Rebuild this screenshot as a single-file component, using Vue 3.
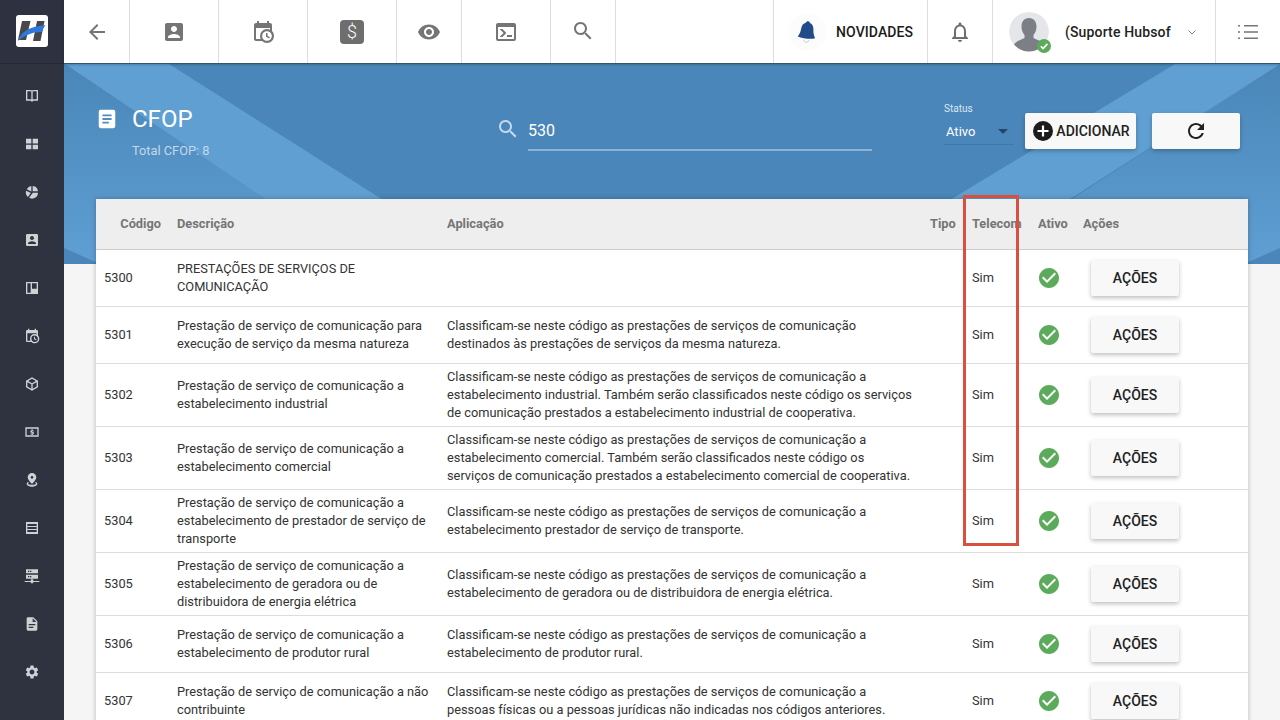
<script setup>
const P = {
  back: 'M20 11H7.83l5.59-5.59L12 4l-8 8 8 8 1.41-1.41L7.83 13H20v-2z',
  box: 'M3 5v14c0 1.1.89 2 2 2h14c1.1 0 2-.9 2-2V5c0-1.1-.9-2-2-2H5c-1.11 0-2 .9-2 2zm12 4c0 1.66-1.34 3-3 3s-3-1.34-3-3 1.34-3 3-3 3 1.34 3 3zm-9 8c0-2 4-3.1 6-3.1s6 1.1 6 3.1v1H6v-1z',
  cal: 'M15,13H16.5V15.82L18.94,17.23L18.19,18.53L15,16.69V13M19,8H5V19H9.67C9.24,18.09 9,17.07 9,16A7,7 0 0,1 16,9C17.07,9 18.09,9.24 19,9.67V8M5,21C3.89,21 3,20.1 3,19V5C3,3.89 3.89,3 5,3H6V1H8V3H16V1H18V3H19A2,2 0 0,1 21,5V11.1C22.24,12.36 23,14.09 23,16A7,7 0 0,1 16,23C14.09,23 12.36,22.24 11.1,21H5M16,11.15A4.85,4.85 0 0,0 11.15,16C11.15,18.68 13.32,20.85 16,20.85A4.85,4.85 0 0,0 20.85,16C20.85,13.32 18.68,11.15 16,11.15Z',
  eye: 'M12 4.5C7 4.5 2.73 7.61 1 12c1.73 4.39 6 7.5 11 7.5s9.27-3.11 11-7.5c-1.73-4.39-6-7.5-11-7.5zM12 17c-2.76 0-5-2.24-5-5s2.24-5 5-5 5 2.24 5 5-2.24 5-5 5zm0-8c-1.66 0-3 1.34-3 3s1.34 3 3 3 3-1.34 3-3-1.34-3-3-3z',
  term: 'M20,19V7H4V19H20M20,3A2,2 0 0,1 22,5V19A2,2 0 0,1 20,21H4A2,2 0 0,1 2,19V5C2,3.89 2.9,3 4,3H20M13,17V15H18V17H13M9.58,13L5.57,9H8.4L11.7,12.3C12.09,12.69 12.09,13.33 11.7,13.72L8.42,17H5.59L9.58,13Z',
  search: 'M15.5 14h-.79l-.28-.27C15.41 12.59 16 11.11 16 9.5 16 5.91 13.09 3 9.5 3S3 5.91 3 9.5 5.91 16 9.5 16c1.61 0 3.09-.59 4.23-1.57l.27.28v.79l5 4.99L20.49 19l-4.99-5zm-6 0C7.01 14 5 11.99 5 9.5S7.01 5 9.5 5 14 7.01 14 9.5 11.99 14 9.5 14z',
  bell: 'M12 22c1.1 0 2-.9 2-2h-4c0 1.1.9 2 2 2zm6-6v-5c0-3.07-1.63-5.64-4.5-6.32V4c0-.83-.67-1.5-1.5-1.5s-1.5.67-1.5 1.5v.68C7.64 5.36 6 7.92 6 11v5l-2 2v1h16v-1l-2-2zm-2 1H8v-6c0-2.48 1.51-4.5 4-4.5s4 2.02 4 4.5v6z',
  list: 'M8 5h14v1.6H8zM8 11.2h14v1.6H8zM8 17.4h14V19H8zM2 5h2v1.6H2zM2 11.2h2v1.6H2zM2 17.4h2V19H2z',
  refresh: 'M17.65 6.35C16.2 4.9 14.21 4 12 4c-4.42 0-7.99 3.58-7.99 8s3.57 8 7.99 8c3.73 0 6.84-2.55 7.73-6h-2.08c-.82 2.33-3.04 4-5.65 4-3.31 0-6-2.69-6-6s2.69-6 6-6c1.66 0 3.14.69 4.22 1.78L13 11h7V4l-2.35 2.35z',
  doc: 'M5 2h14a2 2 0 0 1 2 2v16a2 2 0 0 1-2 2H5a2 2 0 0 1-2-2V4a2 2 0 0 1 2-2zm2 5v2h10V7H7zm0 4v2h10v-2H7zm0 4v2h7v-2H7z',
  book: 'M3 3h7c1 0 1.600.4 2 1 .4-.6 1-1 2-1h7v16h-6.500c-1 0-1.600.4-1.700 1.500h-1.600C11.100 19.400 10.500 19 9.500 19H3V3zm2 2v12h4.500c.6 0 1.100.1 1.500.3V6c0-.6-.4-1-1-1H5zm14 0h-5c-.6 0-1 .4-1 1v11.300c.4-.2.9-.3 1.500-.3H19V5z',
  grid: 'M3 4h8v7.400H3zM13 4h8v7.400h-8zM3 13h8v7H3zM13 13h8v7h-8z',
  pie: 'M11 3v8.200L4.200 8A9 9 0 0 1 11 3zM13 3a9 9 0 0 1 8 8h-8V3zM3.300 10l7 3.600-4.500 6A9 9 0 0 1 3.300 10zM13 13h8a9 9 0 0 1-13.400 7.800L13 13.600V13z',
  dash: 'M3 3h18v18H3V3zm2 2v14h5V5H5zm7 0v8h7V5h-7z',
  cube: 'M12 2l9 5v10l-9 5-9-5V7l9-5zm0 2.300L6.200 7.500 12 10.700l5.800-3.200L12 4.300zM5 9.200v6.600l6 3.300v-6.600L5 9.200zm14 0l-6 3.300v6.600l6-3.300V9.200z',
  money: 'M2 5h20v14H2V5zm2 2v10h16V7H4zm9.200 2.300v-.9h-2v.9c-1 .2-1.700 1-1.700 1.900 0 1.200 1 1.700 2.300 2 .9.200 1.200.4 1.200.8s-.4.7-1 .7c-.7 0-1.100-.3-1.200-.8H9.400c.1 1 .8 1.600 1.800 1.800v.9h2v-.9c1-.2 1.700-.9 1.700-1.900 0-1.300-1-1.800-2.300-2.100-.9-.2-1.200-.4-1.200-.7s.3-.6.9-.6.900.3 1 .7h1.500c-.1-.9-.7-1.600-1.600-1.800z',
  pin: 'M12 1.500a6.500 6.500 0 0 1 6.500 6.500c0 4.300-6.500 10-6.500 10S5.500 12.300 5.500 8A6.500 6.500 0 0 1 12 1.500zm0 4.500a2 2 0 1 0 0 4 2 2 0 0 0 0-4zM4 17.500c0-1.200 1-2 2.200-2.600l1.100 1.500c-.8.300-1.300.7-1.300 1.100 0 .9 2.700 1.500 6 1.500s6-.6 6-1.500c0-.4-.5-.8-1.300-1.100l1.100-1.500c1.200.6 2.200 1.400 2.200 2.600C20 20.500 15.500 22 12 22s-8-1.500-8-4.500z',
  lines: 'M3 3h18v18H3V3zm2 3v3h14V6H5zm0 4.500v3h14v-3H5zm0 4.500v3h14v-3H5z',
  server: 'M3 2h18v6H3V2zm3 2v2h2V4H6zm3 0v2h2V4H9zM3 10h18v6H3v-6zm3 2v2h2v-2H6zm3 0v2h2v-2H9zM1 19.500h9.200V17h3.600v2.500H23v1.500h-9.200v2h-3.600v-2H1v-1.500z',
  file: 'M6 2h8l6 6v12a2 2 0 0 1-2 2H6a2 2 0 0 1-2-2V4a2 2 0 0 1 2-2zm7 1.500V9h5.500L13 3.500zM7 12v2h10v-2H7zm0 4v2h7v-2H7z',
  gear: 'M19.14 12.94c.04-.3.06-.61.06-.94 0-.32-.02-.64-.07-.94l2.03-1.58a.49.49 0 0 0 .12-.61l-1.92-3.32a.488.488 0 0 0-.59-.22l-2.39.96c-.5-.38-1.03-.7-1.62-.94l-.36-2.54a.484.484 0 0 0-.48-.41h-3.84c-.24 0-.43.17-.47.41l-.36 2.54c-.59.24-1.13.57-1.62.94l-2.39-.96c-.22-.08-.47 0-.59.22L2.74 8.87c-.12.21-.08.47.12.61l2.03 1.58c-.05.3-.09.63-.09.94s.02.64.07.94l-2.03 1.58a.49.49 0 0 0-.12.61l1.92 3.32c.12.22.37.29.59.22l2.39-.96c.5.38 1.03.7 1.62.94l.36 2.54c.05.24.24.41.48.41h3.84c.24 0 .44-.17.47-.41l.36-2.54c.59-.24 1.13-.56 1.62-.94l2.39.96c.22.08.47 0 .59-.22l1.92-3.32c.12-.22.07-.47-.12-.61l-2.01-1.58zM12 15.6c-1.98 0-3.6-1.62-3.6-3.6s1.62-3.6 3.6-3.6 3.6 1.62 3.6 3.6-1.62 3.6-3.6 3.6z',
  ok: 'M12 2C6.48 2 2 6.48 2 12s4.48 10 10 10 10-4.48 10-10S17.52 2 12 2zm-2 15l-5-5 1.41-1.41L10 14.17l7.59-7.59L19 8l-9 9z',
};
const side = ['book', 'grid', 'pie', 'box', 'dash', 'cal', 'cube', 'money', 'pin', 'lines', 'server', 'file', 'gear'];
const rows = [
  ['5300', 'PRESTAÇÕES DE SERVIÇOS DE COMUNICAÇÃO', ''],
  ['5301', 'Prestação de serviço de comunicação para execução de serviço da mesma natureza', 'Classificam-se neste código as prestações de serviços de comunicação destinados às prestações de serviços da mesma natureza.'],
  ['5302', 'Prestação de serviço de comunicação a estabelecimento industrial', 'Classificam-se neste código as prestações de serviços de comunicação a estabelecimento industrial. Também serão classificados neste código os serviços de comunicação prestados a estabelecimento industrial de cooperativa.'],
  ['5303', 'Prestação de serviço de comunicação a estabelecimento comercial', 'Classificam-se neste código as prestações de serviços de comunicação a estabelecimento comercial. Também serão classificados neste código os serviços de comunicação prestados a estabelecimento comercial de cooperativa.'],
  ['5304', 'Prestação de serviço de comunicação a estabelecimento de prestador de serviço de transporte', 'Classificam-se neste código as prestações de serviços de comunicação a estabelecimento prestador de serviço de transporte.'],
  ['5305', 'Prestação de serviço de comunicação a estabelecimento de geradora ou de distribuidora de energia elétrica', 'Classificam-se neste código as prestações de serviços de comunicação a estabelecimento de geradora ou de distribuidora de energia elétrica.'],
  ['5306', 'Prestação de serviço de comunicação a estabelecimento de produtor rural', 'Classificam-se neste código as prestações de serviços de comunicação a estabelecimento de produtor rural.'],
  ['5307', 'Prestação de serviço de comunicação a não contribuinte', 'Classificam-se neste código as prestações de serviços de comunicação a pessoas físicas ou a pessoas jurídicas não indicadas nos códigos anteriores.'],
];
</script>

<template>
  <div class="app">
    <aside class="sidebar">
      <div class="logo-wrap">
        <svg class="logo" viewBox="0 0 32 32">
          <rect width="32" height="32" rx="3" fill="#fff" />
          <path d="M6 6h8.500L10 25H2z" fill="#48484c" />
          <path d="M21 6h7.500L24.500 26H17z" fill="#48484c" />
          <path d="M2 26C5 17 12 12 29.500 10c-1.500 2-2.500 4.500-3.500 7C17 16.500 9 20 2 26z" fill="#2f78dc" />
        </svg>
      </div>
      <nav class="side-list">
        <div v-for="n in side" :key="n" class="side-item">
          <svg viewBox="0 0 24 24" class="side-ico"><path :d="P[n]" /></svg>
        </div>
      </nav>
    </aside>

    <div class="main">
      <header class="topbar">
        <div class="tb w66"><svg viewBox="0 0 24 24" class="ti"><path :d="P.back" /></svg></div>
        <div class="tb w89"><svg viewBox="0 0 24 24" class="ti"><path :d="P.box" /></svg></div>
        <div class="tb w89"><svg viewBox="0 0 24 24" class="ti"><path :d="P.cal" /></svg></div>
        <div class="tb w89"><span class="dollar">$</span></div>
        <div class="tb w65"><svg viewBox="0 0 24 24" class="ti"><path :d="P.eye" /></svg></div>
        <div class="tb w89"><svg viewBox="0 0 24 24" class="ti"><path :d="P.term" /></svg></div>
        <div class="tb w65"><svg viewBox="0 0 24 24" class="ti up"><path :d="P.search" /></svg></div>
        <div class="tb-space"></div>
        <div class="tb nov">
          <span class="nov-bell">
            <svg viewBox="0 0 24 28" class="bell-solid">
              <path d="M12 1c1.300 0 2.200.8 2.500 2 3 .9 4.500 3.500 4.800 7 .3 4 1 7 3.200 10.500-5 2-15 2-21 0C3.700 17 4.400 14 4.700 10 5 6.500 6.500 3.900 9.500 3c.3-1.200 1.200-2 2.500-2z" fill="#214c89" />
              <path d="M9 23.500c.5 2 1.500 3 3.200 3s2.700-1 3.100-3" fill="none" stroke="#b9c6d8" stroke-width="1" />
            </svg>
          </span>
          <span class="nov-t">NOVIDADES</span>
        </div>
        <div class="tb w65"><svg viewBox="0 0 24 24" class="ti thin"><path :d="P.bell" /></svg></div>
        <div class="tb user">
          <span class="avatar">
            <svg viewBox="0 0 40 40" class="avatar-svg">
              <circle cx="20" cy="20" r="20" fill="#e4e6e9" />
              <path d="M20 6c5 0 7.500 3.800 7.500 8.500 0 3.500-1.200 6.500-3 8.500v3c2 1.500 8 2.500 10.500 6.500-3.500 4.500-9 7.500-15 7.500s-11.500-3-15-7.500C7.500 28.500 13.500 27.500 15.500 26v-3c-1.800-2-3-5-3-8.500C12.500 9.800 15 6 20 6z" fill="#7c7f86" />
            </svg>
            <svg viewBox="0 0 14 14" class="badge">
              <circle cx="7" cy="7" r="7" fill="#5cab5c" />
              <path d="M3.800 7.200l2.300 2.300 4.300-4.600" fill="none" stroke="#fff" stroke-width="1.600" />
            </svg>
          </span>
          <span class="user-name">(Suporte Hubsof</span>
          <svg viewBox="0 0 12 12" class="chev"><path d="M2.500 4.500L6 8l3.500-3.500" fill="none" stroke="#888" stroke-width="1" /></svg>
        </div>
        <div class="tb w64 last"><svg viewBox="0 0 24 24" class="ti"><path :d="P.list" /></svg></div>
      </header>

      <div class="content">
        <svg class="banner" viewBox="0 0 1216 200" preserveAspectRatio="none">
          <defs>
            <linearGradient id="sideG" x1="0" y1="0" x2="0" y2="1">
              <stop offset="0" stop-color="#4a86b8" />
              <stop offset="1" stop-color="#5f9fd3" />
            </linearGradient>
          </defs>
          <rect width="1216" height="200" fill="#4a86b9" />
          <polygon points="0,0 0,200 305,200" fill="url(#sideG)" />
          <polygon points="1216,0 1216,200 908,200" fill="url(#sideG)" />
          <polygon points="1,0 105,0 420,200 298,200" fill="#5f9fd2" />
          <polygon points="1111,0 1216,0 905,200 780,200" fill="#5f9fd2" />
          <polygon points="0,184 0,200 36,200" fill="#4a86b9" />
          <polygon points="1216,184 1216,200 1180,200" fill="#4a86b9" />
        </svg>

        <section class="head">
          <div class="title-block">
            <div class="title-row">
              <svg viewBox="0 0 24 24" class="title-ico"><path :d="P.doc" /></svg>
              <h1>CFOP</h1>
            </div>
            <p class="total">Total CFOP: 8</p>
          </div>
          <div class="search">
            <svg viewBox="0 0 24 24" class="search-ico"><path :d="P.search" /></svg>
            <div class="search-val">530</div>
          </div>
          <div class="status">
            <div class="status-l">Status</div>
            <div class="status-v"><span>Ativo</span><i class="caret"></i></div>
          </div>
          <button class="btn add">
            <svg viewBox="0 0 20 20" class="plus">
              <circle cx="10" cy="10" r="10" fill="#1c1c1c" />
              <path d="M10 4.500v11M4.500 10h11" stroke="#fff" stroke-width="2.200" />
            </svg>
            ADICIONAR
          </button>
          <button class="btn refresh">
            <svg viewBox="0 0 24 24" class="ref-ico"><path :d="P.refresh" /></svg>
          </button>
        </section>

        <section class="table-wrap">
          <table>
            <colgroup>
              <col class="c1" /><col class="c2" /><col class="c3" /><col class="c4" /><col class="c5" /><col class="c6" /><col class="c7" />
            </colgroup>
            <thead>
              <tr>
                <th class="right">Código</th>
                <th>Descrição</th>
                <th>Aplicação</th>
                <th>Tipo</th>
                <th>Telecom</th>
                <th>Ativo</th>
                <th>Ações</th>
              </tr>
            </thead>
            <tbody>
              <tr v-for="r in rows" :key="r[0]">
                <td>{{ r[0] }}</td>
                <td>{{ r[1] }}</td>
                <td>{{ r[2] }}</td>
                <td></td>
                <td>Sim</td>
                <td><svg viewBox="0 0 24 24" class="ok"><path :d="P.ok" /></svg></td>
                <td><button class="btn act">AÇÕES</button></td>
              </tr>
            </tbody>
          </table>
          <div class="mark"></div>
        </section>
      </div>
    </div>
  </div>
</template>

<style>
html, body { margin: 0; overflow: hidden; }
</style>

<style scoped>
.app { display: flex; width: 1280px; height: 720px; overflow: hidden; font-family: Roboto, "Liberation Sans", sans-serif; background: #f5f5f5; }
.sidebar { width: 64px; flex: none; background: #2f333f; }
.logo-wrap { height: 63px; border-bottom: 1px solid #262a34; background: #2e3240; display: flex; align-items: flex-start; justify-content: center; }
.logo { width: 32px; height: 32px; margin-top: 15px; display: block; }
.side-list { padding-top: 8px; }
.side-item { height: 48px; display: flex; align-items: center; justify-content: center; }
.side-ico { width: 16px; height: 16px; fill: #cfd1d5; }
.main { flex: 1; min-width: 0; display: flex; flex-direction: column; }
.topbar { height: 63px; flex: none; display: flex; background: #fff; border-bottom: 1px solid #33566f; box-shadow: 0 1px 2px rgba(0,0,0,.2); position: relative; z-index: 2; }
.tb { display: flex; align-items: center; justify-content: center; border-right: 1px solid #ddd; box-sizing: border-box; flex: none; }
.w64 { width: 64px; }
.w65 { width: 65px; }
.w66 { width: 66px; }
.w89 { width: 89px; }
.last { border-right: 0; }
.tb-space { flex: 1; border-right: 1px solid #ddd; }
.ti { width: 24px; height: 24px; fill: #757575; }
.up { margin-top: -2px; }
.thin { fill: #6f6f6f; }
.dollar { width: 24px; height: 24px; border-radius: 4px; background: #6e6e6e; color: #fff; font: 300 18px/24px Roboto, sans-serif; text-align: center; }
.nov { width: 154px; justify-content: flex-start; }
.nov-bell { width: 38px; height: 38px; margin-left: 14px; border-radius: 50%; background: #fcfcfc; display: flex; align-items: center; justify-content: center; flex: none; }
.bell-solid { width: 20px; height: 24px; transform: rotate(6deg); }
.nov-t { margin-left: 10px; font-size: 14px; font-weight: 500; color: #1b1b1b; letter-spacing: .1px; }
.user { width: 223px; justify-content: flex-start; padding-left: 16px; }
.avatar { position: relative; width: 40px; height: 40px; flex: none; }
.avatar-svg { width: 40px; height: 40px; display: block; clip-path: circle(20px); }
.badge { position: absolute; right: -2px; bottom: -1px; width: 14px; height: 14px; }
.user-name { margin-left: 16px; font-size: 14px; font-weight: 500; color: #222; white-space: nowrap; letter-spacing: .15px; }
.chev { width: 12px; height: 12px; margin-left: 15px; }
.content { flex: 1; position: relative; min-height: 0; }
.banner { position: absolute; left: 0; top: 0; width: 100%; height: 200px; display: block; }
.head { position: relative; height: 135px; display: flex; align-items: flex-start; padding: 0 40px 0 35px; box-sizing: border-box; }
.title-block { width: 399px; flex: none; padding-top: 40px; color: #fff; }
.title-row { display: flex; align-items: center; height: 30px; }
.title-ico { width: 22px; height: 22px; fill: #fff; margin-left: -3px; }
h1 { margin: 0 0 0 14px; font-size: 24px; font-weight: 400; line-height: 30px; }
.total { margin: 9px 0 0 33px; font-size: 12.800px; line-height: 16px; color: #c3d8ea; }
.search { width: 374px; flex: none; display: flex; padding-top: 53px; }
.search-ico { width: 24px; height: 24px; fill: #c4d9ec; margin-left: -2px; margin-right: 8px; flex: none; }
.search-val { flex: 1; height: 30px; padding-top: 2px; color: #fff; font-size: 16px; line-height: 24px; border-bottom: 2px solid #8db4d6; }
.status { width: 70px; flex: none; margin-left: 72px; padding-top: 39px; color: #fff; }
.status-l { font-size: 10px; line-height: 12px; color: #dbe7f2; }
.status-v { display: flex; align-items: center; justify-content: space-between; margin-top: 4px; height: 25px; padding: 0 6px 0 2px; font-size: 13px; border-bottom: 1px solid #3f77a6; }
.caret { width: 0; height: 0; border: 5px solid transparent; border-top: 5px solid #24466a; border-bottom: 0; }
.btn { border: 0; background: #f8f8f8; border-radius: 2px; box-shadow: 0 2px 4px rgba(0,0,0,.25); font-family: inherit; font-weight: 500; font-size: 14px; color: #222; padding: 0; display: flex; align-items: center; justify-content: center; }
.add { width: 111px; height: 36px; margin: 49px 0 0 11px; padding-left: 2px; gap: 3px; flex: none; }
.plus { width: 20px; height: 20px; }
.refresh { width: 88px; height: 36px; margin: 49px 0 0 16px; flex: none; }
.ref-ico { width: 24px; height: 24px; fill: #222; }
.table-wrap { position: relative; margin: 0 32px; background: #fff; box-shadow: 0 0 5px rgba(0,0,0,.25); }
table { width: 100%; border-collapse: collapse; table-layout: fixed; font-size: 12.800px; color: #333; }
.c1 { width: 73px; } .c2 { width: 270px; } .c3 { width: 483px; } .c4 { width: 42px; } .c5 { width: 66px; } .c6 { width: 45px; } .c7 { width: 173px; }
th { height: 50px; background: #eee; color: #757575; font-weight: 700; font-size: 12.800px; text-align: left; padding: 0 8px 1px; box-sizing: border-box; border-bottom: 1px solid #ccc; white-space: nowrap; }
th.right { text-align: right; }
td { padding: 4px 8px; line-height: 18px; vertical-align: middle; border-bottom: 1px solid #ddd; }
.ok { width: 24px; height: 24px; fill: #5cab5c; display: block; margin-left: -1px; }
.act { width: 88px; height: 36px; margin: 6px 0 6px 8px; }
.mark { position: absolute; left: 867px; top: -4px; width: 50px; height: 345px; border: 3px solid #d8503f; pointer-events: none; }
</style>
